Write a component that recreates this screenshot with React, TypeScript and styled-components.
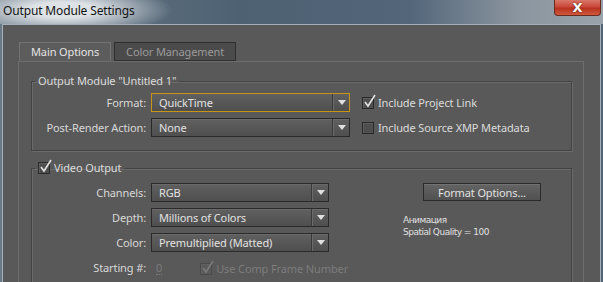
import { FC, ReactNode } from "react";
import styled, { createGlobalStyle } from "styled-components";

const GlobalStyle = createGlobalStyle`
  html, body {
    margin: 0;
    padding: 0;
    background: #5a6b7a;
  }
  body {
    font-family: "Noto Sans", "Liberation Sans", sans-serif;
    font-size: 11px;
    letter-spacing: -0.12px;
  }
`;

const Window = styled.div`
  width: 603px;
  height: 282px;
  overflow: hidden;
  background: linear-gradient(90deg, #6a7a88 0%, #516475 35%, #566878 70%, #7d8a96 88%, #4f6577 100%);
`;

const TitleBar = styled.div`
  height: 24px;
  display: flex;
  align-items: flex-start;
  background:
    radial-gradient(ellipse 110px 26px at 62px 10px, rgba(226, 230, 234, 0.97) 30%, rgba(226, 230, 234, 0) 100%),
    linear-gradient(90deg, #6a7a88 0%, #4e6172 40%, #53667a 68%, #8b959f 86%, #9aa3ab 100%);
`;

const Title = styled.span`
  font-size: 12px;
  color: #141414;
  padding: 2px 0 0 3px;
  letter-spacing: -0.15px;
`;

const CloseButton = styled.div`
  margin-left: auto;
  margin-right: 2px;
  width: 47px;
  height: 16px;
  box-sizing: border-box;
  border: 1px solid #6a2a20;
  border-top: none;
  border-radius: 0 0 4px 4px;
  background: linear-gradient(#d9786a 0%, #c9483a 45%, #b8321f 55%, #cf5a3e 100%);
  display: flex;
  align-items: center;
  justify-content: center;
  color: #ffffff;
  font-family: "DejaVu Sans", sans-serif;
  font-weight: bold;
  font-size: 13px;
  line-height: 1;
  text-shadow: 0 0 2px #4a1a10;
`;

const Content = styled.div`
  margin: 0 2px;
  border: 1px solid #a7b0b8;
  border-bottom: none;
  background: #595959;
  padding: 17px 16px 0 15px;
  height: 300px;
`;

const TabStrip = styled.div`
  display: flex;
  gap: 3px;
  padding-left: 1px;
  position: relative;
  z-index: 1;
`;

const Tab = styled.div<{ active?: boolean }>`
  height: 19px;
  box-sizing: border-box;
  display: flex;
  align-items: center;
  padding: 0 11px 1px 11px;
  color: ${(p) => (p.active ? "#e4e4e4" : "#9a9a9a")};
  background: ${(p) => (p.active ? "#5c5c5c" : "#4b4b4b")};
  border: 1px solid ${(p) => (p.active ? "#737373" : "#2f2f2f")};
  border-bottom-color: ${(p) => (p.active ? "#5c5c5c" : "#2f2f2f")};
  margin-bottom: ${(p) => (p.active ? "-1px" : "0")};
`;

const TabPanel = styled.div`
  border: 1px solid #6d6d6d;
  border-bottom: none;
  background: #595959;
  padding: 12px 11px 0 12px;
  height: 260px;
`;

const Group = styled.fieldset<{ $top?: number }>`
  margin: ${(p) => p.$top ?? 0}px 0 0 0;
  padding: 0;
  border: 1px solid #434343;
  box-shadow: 1px 1px 0 #6b6b6b, inset 1px 1px 0 #6b6b6b;
  min-width: 0;
`;

const Legend = styled.legend`
  margin-left: 3px;
  padding: 0 3px;
  color: #dcdcdc;
  line-height: 14px;
  display: flex;
  align-items: center;
  gap: 3px;
`;

const FormGrid = styled.div<{ $select: number; $pt: number; $pb: number }>`
  display: grid;
  grid-template-columns: 119px ${(p) => p.$select}px 1fr;
  grid-auto-rows: 19px;
  row-gap: 6px;
  padding: ${(p) => p.$pt}px 0 ${(p) => p.$pb}px 0;
  align-items: center;
`;

const Label = styled.div`
  text-align: right;
  padding-right: 5px;
  color: #d8d8d8;
  white-space: nowrap;
`;

const SelectBox = styled.div<{ focused?: boolean }>`
  height: 19px;
  box-sizing: border-box;
  display: flex;
  align-items: center;
  border: 1px solid ${(p) => (p.focused ? "#c9940f" : "#2a2a2a")};
  box-shadow: ${(p) => (p.focused ? "none" : "inset 0 1px 0 #6a6a6a")};
  background: linear-gradient(#606060, #4f4f4f);
  color: #e2e2e2;
  padding-left: 7px;
`;

const SelectText = styled.span`
  flex: 1;
  white-space: nowrap;
`;

const SelectButton = styled.div`
  width: 17px;
  height: 100%;
  display: flex;
  align-items: center;
  justify-content: center;
  border-left: 1px solid #3a3a3a;
  box-shadow: inset 1px 0 0 #6a6a6a;
  box-sizing: border-box;
`;

const Arrow = styled.span`
  width: 0;
  height: 0;
  border-left: 4px solid transparent;
  border-right: 4px solid transparent;
  border-top: 5px solid #e0e0e0;
  margin-left: 1px;
`;

const Select: FC<{ value: string; focused?: boolean }> = ({ value, focused }) => (
  <SelectBox focused={focused}>
    <SelectText>{value}</SelectText>
    <SelectButton>
      <Arrow />
    </SelectButton>
  </SelectBox>
);

const CheckRow = styled.label<{ disabled?: boolean }>`
  display: flex;
  align-items: center;
  gap: 4px;
  color: ${(p) => (p.disabled ? "#7c7c7c" : "#dcdcdc")};
  white-space: nowrap;
`;

const Box = styled.span<{ disabled?: boolean }>`
  position: relative;
  width: 12px;
  height: 12px;
  box-sizing: border-box;
  border: 1px solid ${(p) => (p.disabled ? "#4a4a4a" : "#2a2a2a")};
  background: ${(p) => (p.disabled ? "#5a5a5a" : "#4e4e4e")};
  box-shadow: inset 1px 1px 0 ${(p) => (p.disabled ? "#616161" : "#5e5e5e")};
  flex: none;
`;

const Tick = styled.svg`
  position: absolute;
  left: 1px;
  top: -4px;
`;

const CheckBox: FC<{ checked?: boolean; disabled?: boolean; children: ReactNode }> = ({
  checked,
  disabled,
  children,
}) => (
  <CheckRow disabled={disabled}>
    <Box disabled={disabled}>
      {checked && (
        <Tick width="12" height="14" viewBox="0 0 12 14">
          <path
            d="M1 8 L4 12 L11 1"
            fill="none"
            stroke={disabled ? "#7a7a7a" : "#e2e2e2"}
            strokeWidth="1.6"
          />
        </Tick>
      )}
    </Box>
    {children}
  </CheckRow>
);

const SideCell = styled.div`
  padding-left: 12px;
`;

const SideColumn = styled.div`
  grid-column: 3;
  grid-row: 1 / span 4;
  align-self: start;
  padding-left: 74px;
  display: flex;
  flex-direction: column;
`;

const Button = styled.div`
  margin-left: 20px;
  width: 118px;
  height: 18px;
  box-sizing: border-box;
  border: 1px solid #2a2a2a;
  background: linear-gradient(#646464, #515151);
  box-shadow: inset 0 1px 0 #727272;
  color: #e2e2e2;
  display: flex;
  align-items: center;
  justify-content: center;
  white-space: nowrap;
`;

const Info = styled.div`
  margin-top: 13px;
  font-family: "DejaVu Sans", "Liberation Sans", sans-serif;
  font-size: 9px;
  letter-spacing: -0.5px;
  line-height: 12px;
  color: #e0e0e0;
  white-space: nowrap;
`;

const StartRow = styled.div`
  grid-column: 2;
  display: flex;
  align-items: center;
  gap: 38px;
  padding-left: 5px;
  padding-top: 2px;
`;

const Scrub = styled.span`
  color: #7c7c7c;
  border-bottom: 1px dotted #7c7c7c;
  line-height: 12px;
`;

export default function App() {
  return (
    <>
      <GlobalStyle />
      <Window>
        <TitleBar>
          <Title>Output Module Settings</Title>
          <CloseButton>X</CloseButton>
        </TitleBar>
        <Content>
          <TabStrip>
            <Tab active>Main Options</Tab>
            <Tab>Color Management</Tab>
          </TabStrip>
          <TabPanel>
            <Group>
              <Legend>Output Module "Untitled 1"</Legend>
              <FormGrid $select={199} $pt={5} $pb={13}>
                <Label>Format:</Label>
                <Select value="QuickTime" focused />
                <SideCell>
                  <CheckBox checked>Include Project Link</CheckBox>
                </SideCell>
                <Label>Post-Render Action:</Label>
                <Select value="None" />
                <SideCell>
                  <CheckBox>Include Source XMP Metadata</CheckBox>
                </SideCell>
              </FormGrid>
            </Group>
            <Group $top={10}>
              <Legend>
                <CheckBox checked>Video Output</CheckBox>
              </Legend>
              <FormGrid $select={178} $pt={8} $pb={10}>
                <Label>Channels:</Label>
                <Select value="RGB" />
                <SideColumn>
                  <Button>Format Options...</Button>
                  <Info>
                    Анимация
                    <br />
                    Spatial Quality = 100
                  </Info>
                </SideColumn>
                <Label>Depth:</Label>
                <Select value="Millions of Colors" />
                <Label>Color:</Label>
                <Select value="Premultiplied (Matted)" />
                <Label>Starting #:</Label>
                <StartRow>
                  <Scrub>0</Scrub>
                  <CheckBox checked disabled>
                    Use Comp Frame Number
                  </CheckBox>
                </StartRow>
              </FormGrid>
            </Group>
          </TabPanel>
        </Content>
      </Window>
    </>
  );
}
